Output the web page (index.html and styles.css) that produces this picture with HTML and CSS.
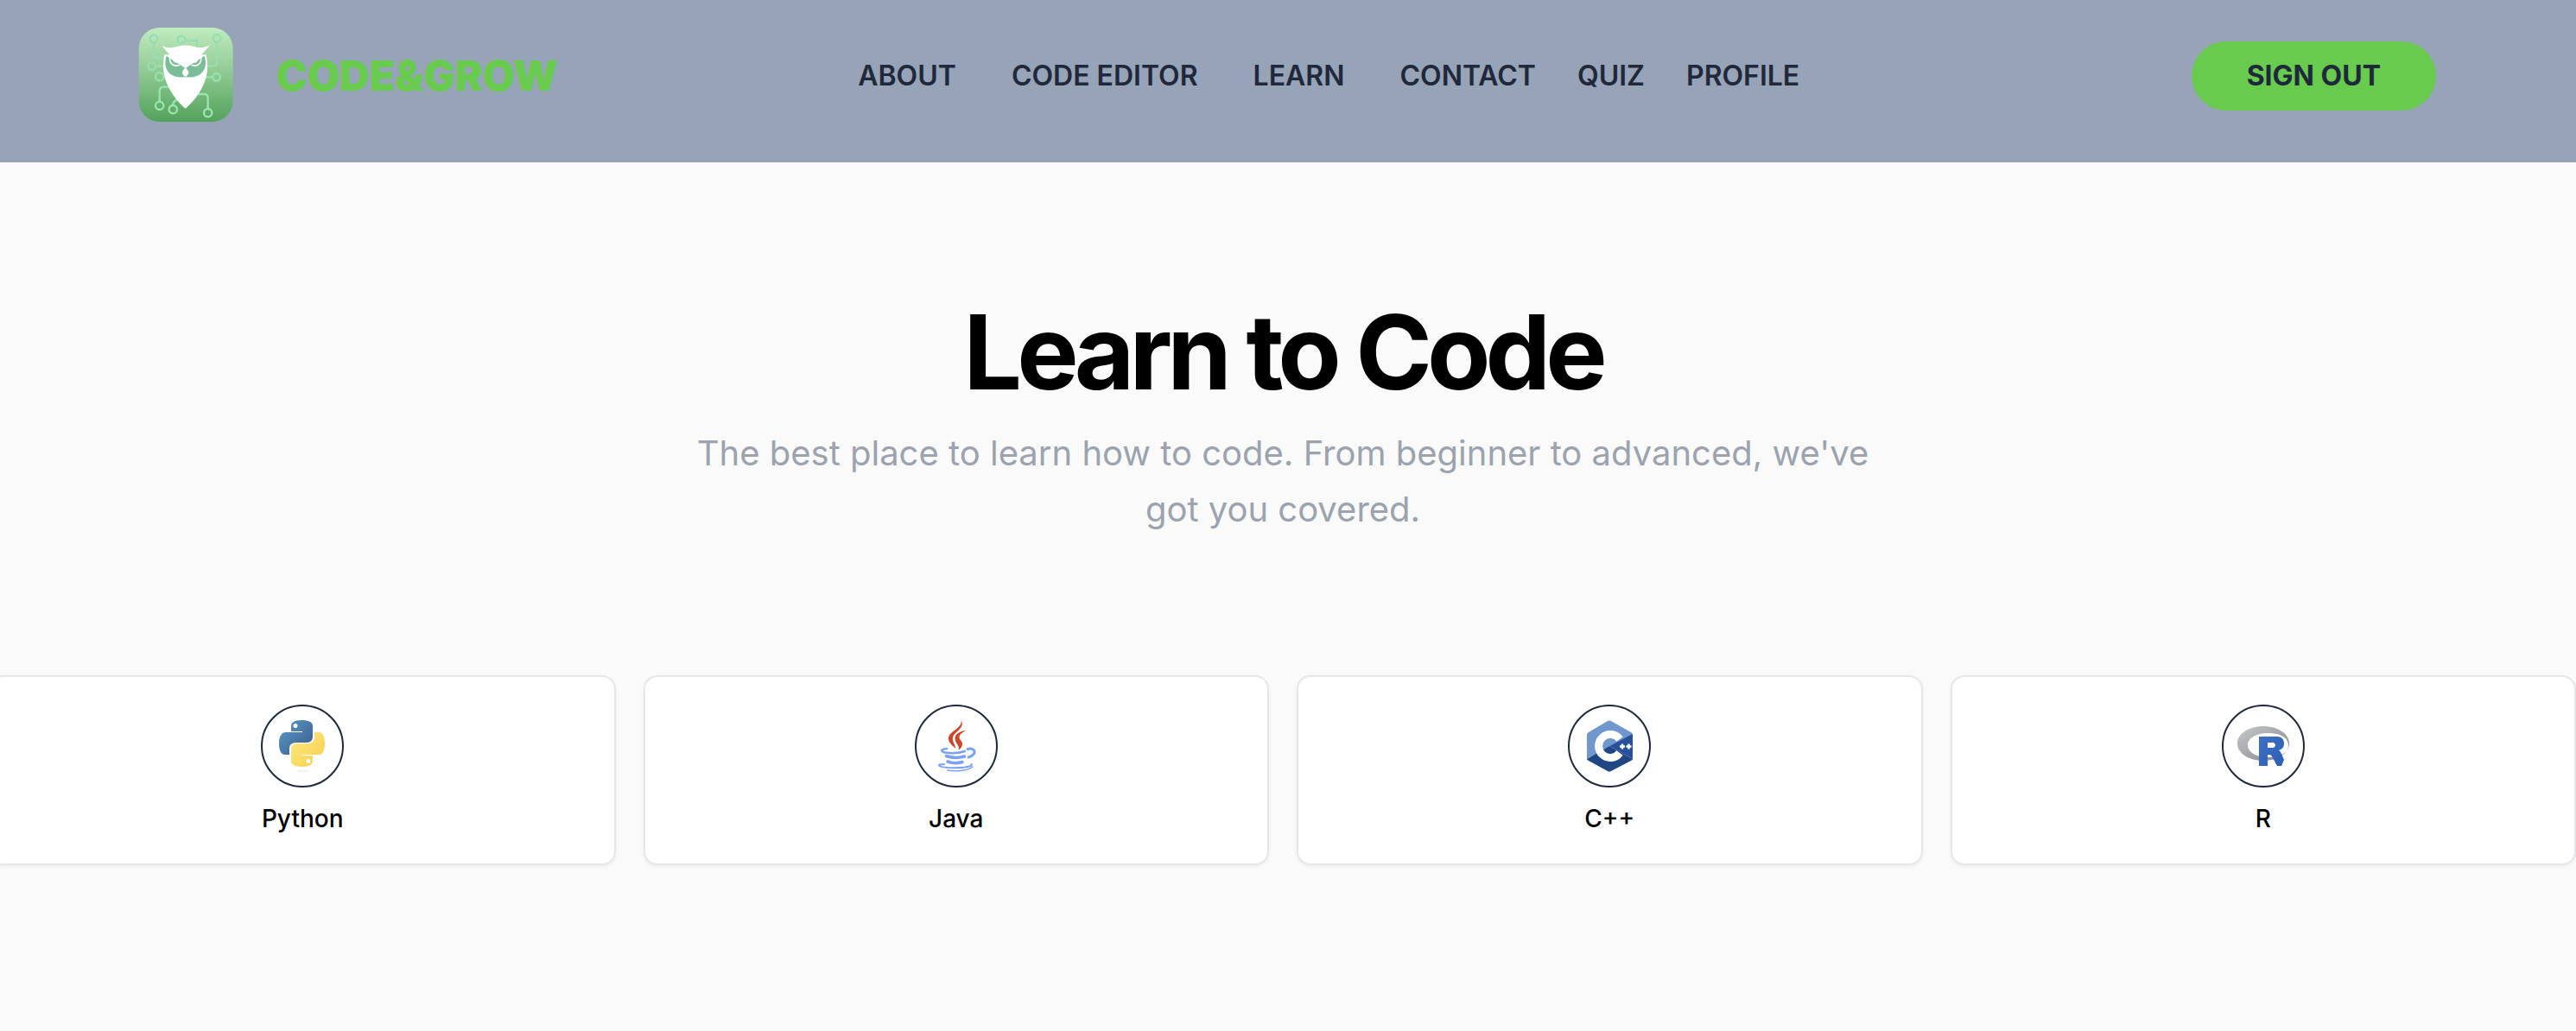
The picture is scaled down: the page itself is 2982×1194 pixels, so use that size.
FILE: index.html
```html
<!DOCTYPE html>
<html lang="en">
<head>
<meta charset="utf-8">
<meta name="viewport" content="width=device-width, initial-scale=1">
<title>Code&amp;Grow – Learn to Code</title>
<link rel="stylesheet" href="styles.css">
</head>
<body>
<header class="header">
  <a class="brand" href="#">
    <svg class="brand-logo" viewBox="0 0 378 378" aria-hidden="true">
      <defs>
        <linearGradient id="tile" x1="0" y1="0" x2="0" y2="1">
          <stop offset="0" stop-color="#c0ebbf"/>
          <stop offset=".45" stop-color="#93cb95"/>
          <stop offset="1" stop-color="#52a25c"/>
        </linearGradient>
        <linearGradient id="trace" gradientUnits="userSpaceOnUse" x1="0" y1="48" x2="0" y2="335">
          <stop offset="0" stop-color="#94dcb2"/>
          <stop offset="1" stop-color="#9ae6b0"/>
        </linearGradient>
      </defs>
      <rect x="26" y="24" width="327" height="327" rx="72" fill="url(#tile)"/>
      <g fill="none" stroke="url(#trace)" stroke-width="7">
        <circle cx="78" cy="63" r="13"/><path d="M78 76v39q0 15 15 15h25"/>
        <circle cx="174" cy="66" r="13"/><path d="M187 69h42v22"/>
        <circle cx="297" cy="61" r="13"/><path d="M297 74v68q0 16-16 16h-20"/>
        <circle cx="71" cy="158" r="13"/><path d="M84 158h32"/>
        <circle cx="98" cy="194" r="14"/>
        <circle cx="296" cy="196" r="13"/><path d="M283 196h-24"/>
        <circle cx="98" cy="295" r="14"/><path d="M98 281v-36q0-15 15-15h25"/>
        <circle cx="145" cy="308" r="14"/><path d="M145 294q0-16 14-18"/>
        <circle cx="266" cy="320" r="14"/><path d="M266 306v-38q0-13-13-13h-25"/>
      </g>
      <path fill="#fff" d="M115 118C107 160 112 195 127 226C143 260 165 287 188 305C211 287 233 260 249 226C264 195 269 160 260 118z"/>
      <path fill="#7bbd96" d="M122 122C113 150 119 177 143 190C160 199 174 196 188 196C202 196 216 199 233 190C257 177 263 150 254 122L188 165z"/>
      <g fill="none" stroke="#fff" stroke-width="5">
        <path d="M134 126c-3 19 10 36 34 28"/>
        <path d="M242 126c3 19-10 36-34 28"/>
      </g>
      <path fill="#fff" d="M143 131q1 17 20 15zM233 131q-1 17-20 15z"/>
      <path fill="#fff" d="M107 86C126 97 143 94 160 89Q188 82 216 89C233 94 250 97 272 84C257 109 222 136 188 164C154 137 119 107 107 86z"/>
      <path fill="#fff" d="M188 162q12 12 11 20q-2 8-11 13q-9-5-11-13q-1-8 11-20z"/>
    </svg>
    <span class="brand-name">CODE&amp;GROW</span>
  </a>
  <nav class="nav" aria-label="Main">
    <div class="nav-main">
      <a href="#">ABOUT</a>
      <a href="#">CODE EDITOR</a>
      <a href="#">LEARN</a>
      <a href="#">CONTACT</a>
    </div>
    <a href="#">QUIZ</a>
    <a href="#">PROFILE</a>
  </nav>
  <button class="sign-out" type="button">SIGN OUT</button>
</header>
<main class="main">
  <section class="hero">
    <h1 class="hero-title">Learn to Code</h1>
    <p class="hero-text">The best place to learn how to code. From beginner to advanced, we've got you covered.</p>
  </section>
  <section class="languages" aria-label="Languages">
    <a class="card" href="#">
      <span class="card-icon">
        <svg viewBox="0 0 60 60" aria-hidden="true">
          <defs>
            <linearGradient id="py-blue" x1="0" y1="0" x2="1" y2="1"><stop offset="0" stop-color="#5d9acb"/><stop offset="1" stop-color="#375c88"/></linearGradient>
            <linearGradient id="py-gold" x1="0" y1="0" x2="1" y2="1"><stop offset="0" stop-color="#ffea84"/><stop offset="1" stop-color="#f5cd4b"/></linearGradient>
          </defs>
          <path fill="url(#py-blue)" d="M29 0C20 0 17 3 17 7v6h13v1H11C5 14 3 20 3 27s2 13 7 13h5v-7q0-7 8-7h12q7 0 7-7V7C42 2 37 0 29 0zM22 4a2.500 2.500 0 1 1 0 5a2.500 2.500 0 0 1 0-5z"/>
          <path fill="url(#py-gold)" d="M30 54c9 0 12-3 12-7v-6H29v-1h20c5 0 7-6 7-13s-2-13-7-13h-5v6q0 7-8 7H24q-7 0-7 7v13c0 5 5 7 13 7zM37 50a2.500 2.500 0 1 1 0-5a2.500 2.500 0 0 1 0 5z"/>
          <ellipse cx="30" cy="59" rx="7" ry="1" fill="#f0f0f0"/>
        </svg>
      </span>
      <span class="card-label">Python</span>
    </a>
    <a class="card" href="#">
      <span class="card-icon">
        <svg viewBox="0 0 60 60" aria-hidden="true">
          <path fill="#d0442b" d="M35.500 0C41 9 27 14 26 20C25 25 29 28 29 32.500C25 29 21 26 21 21C21 13 38 9 35.500 0z"/>
          <path fill="#d0442b" d="M41.500 12C37 14 33 17 33.500 20.500C34 23 37 24 37 27.500C37 31 35 33 32.500 34.500C34.500 29 28.500 27 28.500 21.500C28.500 15 36 12.500 41.500 12z"/>
          <g fill="none" stroke="#7ba2f2" stroke-linecap="round">
            <path stroke-width="2.500" d="M19 33C12 34 11 36 17 37.500C24 38.500 34 38 40 36"/>
            <path stroke-width="3.500" d="M18.500 41.500q10 3.500 21 .5M20 48q8 3 17 .5"/>
            <path stroke-width="3" d="M43 33.500c6-2 10 2 7 6q-2 2.500-6 3.500"/>
            <path stroke-width="2" d="M16 51q-8 0-5.500 2c5 3 28 3 36 0q2-1 1-2"/>
            <path stroke-width="1.500" d="M20 58c11 2 24 0 29-4"/>
          </g>
        </svg>
      </span>
      <span class="card-label">Java</span>
    </a>
    <a class="card" href="#">
      <span class="card-icon">
        <svg viewBox="0 0 60 60" aria-hidden="true">
          <path fill="#7197cf" d="M28 1q2-1 4 0l23 13q2 1 2 3L30 30L4 45V17q0-2 2-3z"/>
          <path fill="#204684" d="M4 45L30 30l27 15q0 1-2 2L32 59q-2 1-4 0L6 47q-2-1-2-2z"/>
          <path fill="#28519a" d="M57 16v29L30 30z"/>
          <path fill="none" stroke="#fff" stroke-width="9" d="M42 22A13.500 13.500 0 1 0 42 38"/>
          <path fill="none" stroke="#fff" stroke-width="2.400" d="M42 30.500h6M45 27.500v6M49.500 30.500h6M52.500 27.500v6"/>
        </svg>
      </span>
      <span class="card-label">C++</span>
    </a>
    <a class="card" href="#">
      <span class="card-icon">
        <svg viewBox="0 0 60 60" aria-hidden="true">
          <defs>
            <linearGradient id="r-gray" x1="0" y1="0" x2="1" y2="1"><stop offset="0" stop-color="#c6c8cb"/><stop offset="1" stop-color="#85868b"/></linearGradient>
            <linearGradient id="r-blue" x1="0" y1="0" x2="1" y2="1"><stop offset="0" stop-color="#3f70c4"/><stop offset="1" stop-color="#2b5fb5"/></linearGradient>
          </defs>
          <path fill="url(#r-gray)" fill-rule="evenodd" d="M30 7c17 0 30 9 30 20S47 47 30 47S0 38 0 27S13 7 30 7zM35 15c-13 0-23 6-23 14s10 14 23 14s24-4 24-14s-11-14-24-14z"/>
          <path fill="url(#r-blue)" fill-rule="evenodd" d="M25 19h21c5 0 8 3 8 8s-3 7-6 8q2 1 3 4l3 7-3 7H46l-6-11q-1-2-3-2h-2v13H25zM35 26v6h6c4 0 4-6 0-6z"/>
        </svg>
      </span>
      <span class="card-label">R</span>
    </a>
  </section>
</main>
</body>
</html>
```
FILE: styles.css
```css
* {
  box-sizing: border-box;
}

body {
  margin: 0;
  background: #fafafa;
  color: #000;
  font-family: Inter, "Liberation Sans", sans-serif;
  overflow-x: hidden;
}

a {
  color: inherit;
  text-decoration: none;
}

.header {
  display: flex;
  align-items: center;
  justify-content: space-between;
  padding: 24px 162px 36px 152px;
  background: #97a3b6;
  color: #1f293b;
}

.brand {
  display: flex;
  align-items: center;
  gap: 42px;
}

.brand-logo {
  width: 126px;
  height: 126px;
  margin-bottom: 2px;
}

.brand-name {
  color: #68cb4d;
  font-size: 48px;
  font-weight: 900;
  line-height: 56px;
}

.nav {
  display: flex;
  gap: 48px;
  margin-right: 106px;
  font-size: 32px;
  font-weight: 600;
  line-height: 48px;
}

.nav-main {
  display: flex;
  gap: 64px;
}

.sign-out {
  padding: 16px 64px;
  border: 0;
  border-radius: 40px;
  background: #68cb4d;
  color: inherit;
  font: 700 32px/48px Inter, "Liberation Sans", sans-serif;
  cursor: pointer;
}

.main {
  margin-left: -12px;
  padding: 160px 0 192px;
}

.hero {
  max-width: 1400px;
  margin: 0 auto 160px;
  text-align: center;
}

.hero-title {
  margin: 0 0 24px;
  font-size: 120px;
  font-weight: 700;
  line-height: 120px;
  letter-spacing: -0.05em;
}

.hero-text {
  margin: 0;
  color: #9ca3af;
  font-size: 40px;
  line-height: 65px;
}

.languages {
  display: grid;
  grid-template-columns: repeat(4, 1fr);
  gap: 32px;
}

.card {
  display: flex;
  flex-direction: column;
  align-items: center;
  gap: 16px;
  padding: 32px;
  border: 2px solid #e5e7eb;
  border-radius: 16px;
  background: #fff;
  box-shadow: 0 2px 4px rgb(0 0 0 / 5%);
}

.card-icon {
  padding: 16px;
  border: 2px solid #1f293b;
  border-radius: 50%;
}

.card-icon svg {
  display: block;
  width: 60px;
  height: 60px;
}

.card-label {
  font-size: 28px;
  font-weight: 500;
  line-height: 40px;
}
```
